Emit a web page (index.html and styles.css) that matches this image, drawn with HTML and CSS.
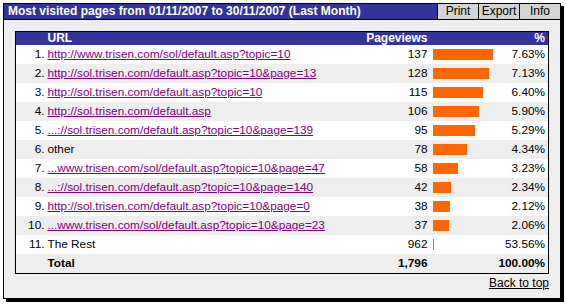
FILE: index.html
```html
<!DOCTYPE html>
<html>
<head>
<meta charset="utf-8">
<link rel="stylesheet" href="styles.css">
</head>
<body>
<div class="panel">
  <div class="titlebar">
    <div class="title">Most visited pages from 01/11/2007 to 30/11/2007 (Last Month)</div>
    <div class="tools">
      <span class="btn">Print</span><span class="btn">Export</span><span class="btn">Info</span>
    </div>
  </div>
  <div class="content">
    <table class="report">
      <colgroup>
        <col class="c-rank"><col class="c-url"><col class="c-count"><col class="c-bar"><col class="c-pct">
      </colgroup>
      <thead>
        <tr><th></th><th class="l">URL</th><th class="r">Pageviews</th><th></th><th class="r pct">%</th></tr>
      </thead>
      <tbody>
        <tr><td class="rank">1.</td><td class="url"><a href="#">http://www.trisen.com/sol/default.asp?topic=10</a></td><td class="num">137</td><td class="barc"><span class="bar" style="width:60px"></span></td><td class="pct">7.63%</td></tr>
        <tr><td class="rank">2.</td><td class="url"><a href="#">http://sol.trisen.com/default.asp?topic=10&amp;page=13</a></td><td class="num">128</td><td class="barc"><span class="bar" style="width:56px"></span></td><td class="pct">7.13%</td></tr>
        <tr><td class="rank">3.</td><td class="url"><a href="#">http://sol.trisen.com/default.asp?topic=10</a></td><td class="num">115</td><td class="barc"><span class="bar" style="width:50px"></span></td><td class="pct">6.40%</td></tr>
        <tr><td class="rank">4.</td><td class="url"><a href="#">http://sol.trisen.com/default.asp</a></td><td class="num">106</td><td class="barc"><span class="bar" style="width:46px"></span></td><td class="pct">5.90%</td></tr>
        <tr><td class="rank">5.</td><td class="url"><a href="#">...://sol.trisen.com/default.asp?topic=10&amp;page=139</a></td><td class="num">95</td><td class="barc"><span class="bar" style="width:42px"></span></td><td class="pct">5.29%</td></tr>
        <tr><td class="rank">6.</td><td class="url">other</td><td class="num">78</td><td class="barc"><span class="bar" style="width:34px"></span></td><td class="pct">4.34%</td></tr>
        <tr><td class="rank">7.</td><td class="url"><a href="#">...www.trisen.com/sol/default.asp?topic=10&amp;page=47</a></td><td class="num">58</td><td class="barc"><span class="bar" style="width:25px"></span></td><td class="pct">3.23%</td></tr>
        <tr><td class="rank">8.</td><td class="url"><a href="#">...://sol.trisen.com/default.asp?topic=10&amp;page=140</a></td><td class="num">42</td><td class="barc"><span class="bar" style="width:18px"></span></td><td class="pct">2.34%</td></tr>
        <tr><td class="rank">9.</td><td class="url"><a href="#">http://sol.trisen.com/default.asp?topic=10&amp;page=0</a></td><td class="num">38</td><td class="barc"><span class="bar" style="width:17px"></span></td><td class="pct">2.12%</td></tr>
        <tr><td class="rank">10.</td><td class="url"><a href="#">...www.trisen.com/sol/default.asp?topic=10&amp;page=23</a></td><td class="num">37</td><td class="barc"><span class="bar" style="width:16px"></span></td><td class="pct">2.06%</td></tr>
        <tr><td class="rank">11.</td><td class="url">The Rest</td><td class="num">962</td><td class="barc"><span class="bar" style="width:1px"></span></td><td class="pct">53.56%</td></tr>
        <tr class="total"><td class="rank"></td><td class="url">Total</td><td class="num">1,796</td><td class="barc"></td><td class="pct">100.00%</td></tr>
      </tbody>
    </table>
    <div class="backtop"><a href="#">Back to top</a></div>
  </div>
</div>
</body>
</html>
```

FILE: styles.css
```css
html, body {
  margin: 0;
  padding: 0;
  background: #ffffff;
}
body {
  padding: 3px;
  font-family: "Liberation Sans", Arial, sans-serif;
  font-size: 12px;
  color: #000;
}
.panel {
  box-sizing: border-box;
  width: 558px;
  height: 296px;
  border: 1px solid #000;
  background: #eeeeee;
  box-shadow: 3px 3px 0 #000;
  display: flex;
  flex-direction: column;
}
.titlebar {
  display: flex;
  height: 15px;
  border-bottom: 1px solid #000;
  background: #333399;
}
.title {
  flex: 1;
  padding-left: 4px;
  color: #fff;
  font-weight: bold;
  line-height: 15px;
  white-space: nowrap;
  overflow: hidden;
}
.tools {
  display: flex;
}
.btn {
  width: 40px;
  border-left: 1px solid #000;
  background: #d4d4d4;
  text-align: center;
  line-height: 15px;
  color: #000;
}
.content {
  padding: 11px 11px 0 11px;
}
.report {
  width: 100%;
  border-collapse: collapse;
  table-layout: fixed;
  border: 1px solid #000;
}
.c-rank { width: 31px; }
.c-count { width: 66px; }
.c-bar { width: 68px; }
.c-pct { width: 51px; }
.report th {
  background: #333399;
  color: #fff;
  font-weight: bold;
  line-height: 13px;
  padding: 0;
  white-space: nowrap;
}
.report th.l { text-align: left; padding-left: 1px; }
.report th.r { text-align: right; padding-right: 2px; }
.report th.pct { padding-right: 3px; }
.report td {
  padding: 0;
  font-size: 11.8px;
  line-height: 19px;
  height: 19px;
  white-space: nowrap;
  overflow: hidden;
}
.report tbody tr:nth-child(odd) { background: #ffffff; }
.report tbody tr:nth-child(even) { background: #eeeeee; }
.rank { text-align: right; padding-right: 2px !important; }
.url { padding-left: 1px !important; }
.url a { color: #800080; text-decoration: underline; }
.num { text-align: right; padding-right: 2px !important; }
.barc { padding-left: 3px !important; }
.bar {
  display: inline-block;
  height: 11px;
  background: #ff6600;
  vertical-align: middle;
}
.pct { text-align: right; padding-right: 3px !important; }
.total td { font-weight: bold; }
.backtop {
  text-align: right;
  padding-top: 2px;
  line-height: 14px;
}
.backtop a { color: #000; text-decoration: underline; }
```
